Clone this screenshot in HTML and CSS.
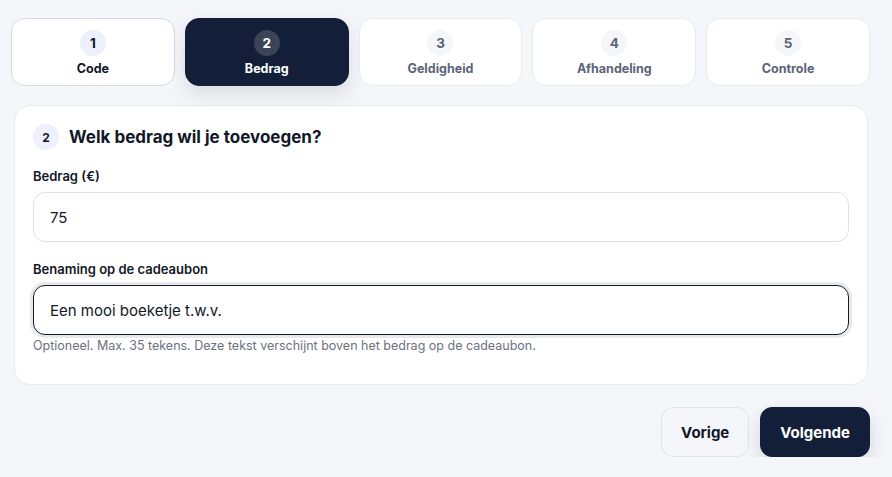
FILE: index.html
```html
<!DOCTYPE html>
<html lang="nl">

<head>
    <meta charset="UTF-8">
    <meta name="viewport" content="width=device-width, initial-scale=1.0">
    <title>Cadeaubon toevoegen</title>
    <link rel="stylesheet" href="styles.css">
</head>

<body>
    <div class="wizard">
        <!-- stappen -->
        <div class="steps">
            <div class="step done">
                <span class="step-num">1</span>
                <span class="step-label">Code</span>
            </div>
            <div class="step active">
                <span class="step-num">2</span>
                <span class="step-label">Bedrag</span>
            </div>
            <div class="step">
                <span class="step-num">3</span>
                <span class="step-label">Geldigheid</span>
            </div>
            <div class="step">
                <span class="step-num">4</span>
                <span class="step-label">Afhandeling</span>
            </div>
            <div class="step">
                <span class="step-num">5</span>
                <span class="step-label">Controle</span>
            </div>
        </div>

        <div class="card">
            <h2 class="card-title"><span class="badge">2</span>Welk bedrag wil je toevoegen?</h2>

            <div class="field">
                <label class="field-label" for="amount">Bedrag (€)</label>
                <input class="field-input" id="amount" type="text" value="75">
            </div>

            <div class="field">
                <label class="field-label" for="name">Benaming op de cadeaubon</label>
                <input class="field-input focus" id="name" type="text" value="Een mooi boeketje t.w.v.">
                <p class="field-help">Optioneel. Max. 35 tekens. Deze tekst verschijnt boven het bedrag op de cadeaubon.</p>
            </div>
        </div>

        <div class="actions">
            <button class="btn btn-secondary">Vorige</button>
            <button class="btn btn-primary">Volgende</button>
        </div>
    </div>
</body>

</html>
```

FILE: styles.css
```css
body {
    font-family: 'Inter', 'Liberation Sans', sans-serif;
    margin: 0;
    padding: 0;
    background-color: #f5f6fa;
    color: #111827;
}

.wizard {
    width: 859px;
    padding: 18px 0 0 11px;
}

/* Stappen */
.steps {
    display: grid;
    grid-template-columns: repeat(5, 1fr);
    gap: 10px;
}

.step {
    display: flex;
    flex-direction: column;
    align-items: center;
    gap: 5px;
    height: 68px;
    box-sizing: border-box;
    padding-top: 11px;
    background-color: #fff;
    border: 1px solid #e9ebf0;
    border-radius: 14px;
    color: #5b6478;
}

.step-num {
    display: flex;
    align-items: center;
    justify-content: center;
    width: 26px;
    height: 26px;
    border-radius: 50%;
    background-color: #f5f6fa;
    font-size: 13.5px;
    font-weight: 700;
}

.step-label {
    font-size: 12.5px;
    font-weight: 700;
    line-height: 15px;
}

.step.done {
    border-color: #d5d8df;
    color: #111827;
}

.step.done .step-num {
    background-color: #eef1fd;
}

.step.active {
    background-color: #131f38;
    border-color: #131f38;
    color: #fff;
    box-shadow: 0 8px 20px rgba(19, 31, 56, 0.12);
}

.step.active .step-num {
    background-color: #3b4456;
}

/* Kaart */
.card {
    margin: 19px 2px 0 3px;
    background-color: #fff;
    border: 1px solid #e9ebf0;
    border-radius: 16px;
    padding: 18px 18px 31px 18px;
}

.card-title {
    display: flex;
    align-items: center;
    gap: 10px;
    margin: 0 0 18px;
    font-size: 17px;
    font-weight: 700;
}

.badge {
    display: flex;
    align-items: center;
    justify-content: center;
    width: 26px;
    height: 26px;
    border-radius: 50%;
    background-color: #eef1fd;
    font-size: 12px;
    font-weight: 700;
}

.field {
    margin-bottom: 19px;
}

.field:last-child {
    margin-bottom: 0;
}

.field-label {
    display: block;
    font-size: 13px;
    font-weight: 600;
    margin-bottom: 8px;
}

.field-input {
    display: block;
    width: 100%;
    height: 50px;
    box-sizing: border-box;
    padding: 0 16px;
    border: 1px solid #dbe1ee;
    border-radius: 12px;
    font-family: inherit;
    font-size: 15px;
    color: #111827;
    background-color: #fff;
    outline: none;
}

.field-input.focus {
    border-color: #111827;
    box-shadow: 0 0 0 3px #e8e9ed;
}

.field-help {
    margin: 3px 0 0;
    font-size: 12.5px;
    color: #6b7280;
}

/* Knoppen */
.actions {
    display: flex;
    justify-content: flex-end;
    gap: 11px;
    margin-top: 22px;
}

.btn {
    height: 50px;
    padding: 0 19px;
    border-radius: 12px;
    font-family: inherit;
    font-size: 15px;
    font-weight: 700;
    cursor: pointer;
}

.btn-secondary {
    background-color: transparent;
    border: 1px solid #dde3ef;
    color: #111827;
}

.btn-primary {
    background-color: #131f38;
    border: 1px solid #131f38;
    color: #fff;
    box-shadow: 0 8px 18px rgba(19, 31, 56, 0.15);
}
```
